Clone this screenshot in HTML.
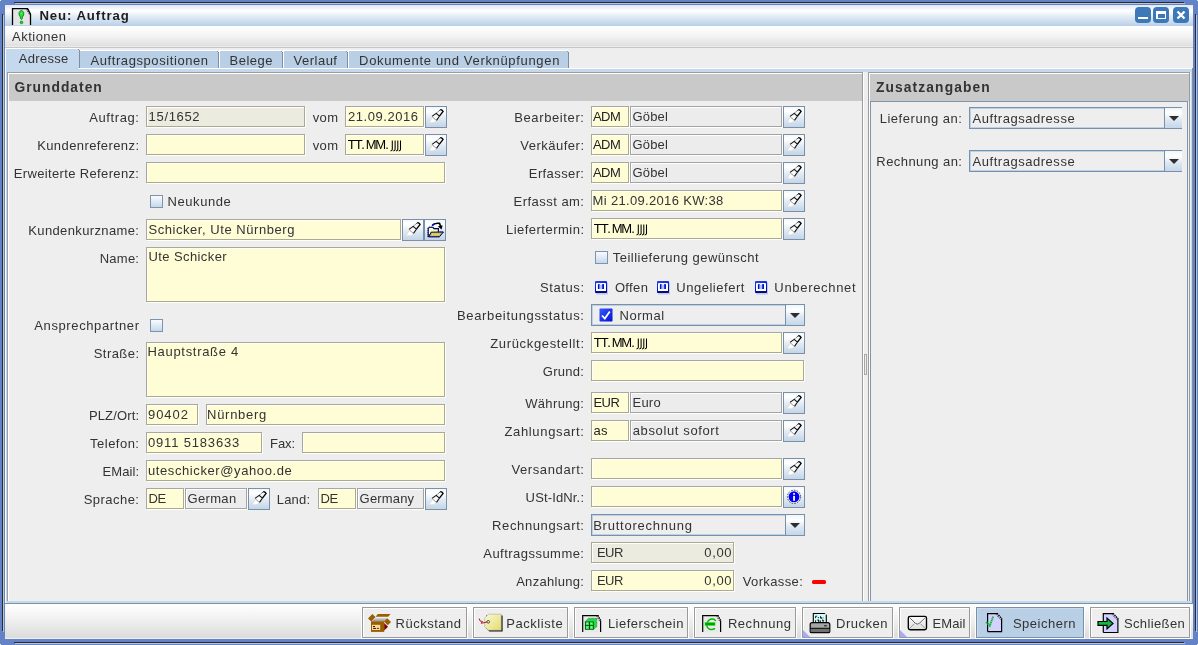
<!DOCTYPE html>
<html><head><meta charset="utf-8"><title>Neu: Auftrag</title>
<style>
html,body{margin:0;padding:0;width:1198px;height:645px;overflow:hidden;position:relative;background:#6383c6}
div{position:absolute}
.t{position:absolute;white-space:nowrap;font-family:"Liberation Sans",sans-serif;line-height:20px;height:20px}
svg{position:absolute}
</style></head><body>
<div style="left:0;top:0;width:1198px;height:645px;overflow:hidden;will-change:transform">
<div style="left:0px;top:0px;width:1198px;height:645px;background:#6383c6"></div>
<div style="left:14px;top:2px;width:1170px;height:1px;background:#2a2a2e"></div>
<div style="left:15px;top:3px;width:1170px;height:1px;background:#b5c6dc"></div>
<div style="left:14px;top:642px;width:1170px;height:1px;background:#2a2a2e"></div>
<div style="left:15px;top:643px;width:1170px;height:1px;background:#b5c6dc"></div>
<div style="left:2px;top:14px;width:1px;height:617px;background:#2a2a2e"></div>
<div style="left:3px;top:15px;width:1px;height:617px;background:#b5c6dc"></div>
<div style="left:1195px;top:14px;width:1px;height:617px;background:#2a2a2e"></div>
<div style="left:1196px;top:15px;width:1px;height:617px;background:#b5c6dc"></div>
<div style="left:0px;top:0px;width:1px;height:1px;background:#f4f4f4"></div>
<div style="left:1197px;top:0px;width:1px;height:1px;background:#f4f4f4"></div>
<div style="left:0px;top:644px;width:1px;height:1px;background:#f4f4f4"></div>
<div style="left:1197px;top:644px;width:1px;height:1px;background:#f4f4f4"></div>
<div style="left:5px;top:5px;width:1188px;height:21px;background:linear-gradient(#dfe7f4 0%,#ffffff 28%,#dfe9f4 58%,#b9d0e8 100%)"></div>
<svg style="position:absolute;left:11px;top:7px" width="22" height="20" viewBox="0 0 22 20">
<path d="M1.5 18 V1.6 H16.6 L19.5 7.2 V18" fill="#e4e4e4" stroke="#000" stroke-width="1.3"/>
<path d="M16.4 1.8 L19.5 7.4" stroke="#000" stroke-width="1.1" stroke-dasharray="1 0.9"/>
<path d="M15.3 2.6 L18.5 7.8" stroke="#222" stroke-width="0.9" stroke-dasharray="0.9 1"/>
<path d="M10.4 3 L12.7 5.3 V8 L11.4 10 V11.5 L10.4 12.6 L9.4 11.5 V10 L8.1 8 V5.3 Z" fill="#20e030" stroke="#007a10" stroke-width="0.8"/>
<path d="M9.6 5.8 h1.6 v1.6 h-1.6z" fill="#8af090" opacity="0.7"/>
<circle cx="10.5" cy="15.4" r="1.35" fill="#20e030" stroke="#007a10" stroke-width="0.7"/>
</svg>
<div class="t" style="left:39.4px;top:6px;font-size:13.2px;font-weight:bold;letter-spacing:0.913px;color:#1e1e1e;">Neu: Auftrag</div>
<div style="left:1135px;top:7px;width:16px;height:16px;background:#3d79b9;border-radius:4px"></div>
<div style="left:1153px;top:7px;width:16px;height:16px;background:#3d79b9;border-radius:4px"></div>
<div style="left:1173px;top:7px;width:16px;height:16px;background:#3d79b9;border-radius:4px"></div>
<div style="left:1138px;top:17px;width:10px;height:2px;background:#fff"></div>
<div style="left:1156px;top:11px;width:10px;height:8px;background:#fff"></div>
<div style="left:1157.5px;top:14px;width:7px;height:3.5px;background:#3d79b9"></div>
<svg style="position:absolute;left:1173px;top:7px" width="16" height="16"><path d="M4.5 4.5 L11.5 11.5 M11.5 4.5 L4.5 11.5" stroke="#fff" stroke-width="2.3"/></svg>
<div style="left:5px;top:26px;width:1188px;height:21px;background:linear-gradient(#ffffff 0%,#f6f6f6 40%,#dedede 100%)"></div>
<div style="left:5px;top:47px;width:1188px;height:1px;background:#c6c6c6"></div>
<div style="left:5px;top:46px;width:1188px;height:1px;background:#ececec"></div>
<div class="t" style="left:12.100000000000001px;top:27px;font-size:13px;letter-spacing:0.469px;color:#333;">Aktionen</div>
<div style="left:5px;top:48px;width:1188px;height:556px;background:#eeeeee"></div>
<div style="left:5px;top:68px;width:1188px;height:536px;background:#ffffff"></div>
<div style="left:6px;top:69px;width:1186px;height:534px;background:#c4d8ee"></div>
<div style="left:5px;top:603px;width:1188px;height:1px;background:#7f90a2"></div>
<div style="left:1192px;top:68px;width:1px;height:536px;background:#7f90a2"></div>
<div style="left:79px;top:50px;width:139px;height:18px;background:#ffffff"></div>
<div style="left:80px;top:51px;width:138px;height:17px;background:#b8cfe6"></div>
<div style="left:218px;top:52px;width:1px;height:16px;background:#7e8ea0"></div>
<div style="left:217px;top:51px;width:1px;height:1px;background:#8896a8"></div>
<div class="t" style="left:90.5px;top:51px;font-size:13px;letter-spacing:0.580px;color:#333;">Auftragspositionen</div>
<div style="left:219px;top:50px;width:63px;height:18px;background:#ffffff"></div>
<div style="left:220px;top:51px;width:62px;height:17px;background:#b8cfe6"></div>
<div style="left:282px;top:52px;width:1px;height:16px;background:#7e8ea0"></div>
<div style="left:281px;top:51px;width:1px;height:1px;background:#8896a8"></div>
<div class="t" style="left:229.5px;top:51px;font-size:13px;letter-spacing:0.512px;color:#333;">Belege</div>
<div style="left:283px;top:50px;width:64px;height:18px;background:#ffffff"></div>
<div style="left:284px;top:51px;width:63px;height:17px;background:#b8cfe6"></div>
<div style="left:347px;top:52px;width:1px;height:16px;background:#7e8ea0"></div>
<div style="left:346px;top:51px;width:1px;height:1px;background:#8896a8"></div>
<div class="t" style="left:293.5px;top:51px;font-size:13px;letter-spacing:0.499px;color:#333;">Verlauf</div>
<div style="left:348px;top:50px;width:220px;height:18px;background:#ffffff"></div>
<div style="left:349px;top:51px;width:219px;height:17px;background:#b8cfe6"></div>
<div style="left:568px;top:52px;width:1px;height:16px;background:#7e8ea0"></div>
<div style="left:567px;top:51px;width:1px;height:1px;background:#8896a8"></div>
<div class="t" style="left:359.1px;top:51px;font-size:13px;letter-spacing:0.670px;color:#333;">Dokumente und Verknüpfungen</div>
<div style="left:5px;top:48px;width:74px;height:21px;background:#ffffff"></div>
<div style="left:6px;top:49px;width:73px;height:23px;background:#c4d8ee"></div>
<div style="left:79px;top:50px;width:1px;height:18px;background:#7e8ea0"></div>
<div style="left:78px;top:49px;width:1px;height:1px;background:#8896a8"></div>
<div class="t" style="left:18.8px;top:49px;font-size:13px;letter-spacing:0.306px;color:#333;">Adresse</div>
<div style="left:7px;top:72px;width:857px;height:529px;background:#eeeeee"></div>
<div style="left:7px;top:72px;width:855px;height:1px;background:#9c9c9c"></div>
<div style="left:7px;top:72px;width:1px;height:529px;background:#9c9c9c"></div>
<div style="left:8px;top:73px;width:854px;height:1px;background:#fff"></div>
<div style="left:8px;top:73px;width:1px;height:528px;background:#fff"></div>
<div style="left:862px;top:72px;width:1px;height:529px;background:#9c9c9c"></div>
<div style="left:863px;top:72px;width:1px;height:529px;background:#fff"></div>
<div style="left:9px;top:74px;width:853px;height:27px;background:#c9c9c9"></div>
<div class="t" style="left:14.5px;top:78px;font-size:13.8px;font-weight:bold;letter-spacing:1.006px;color:#333;">Grunddaten</div>
<div style="left:864px;top:72px;width:4px;height:529px;background:#eeeeee"></div>
<div style="left:868px;top:72px;width:323px;height:529px;background:#eeeeee"></div>
<div style="left:868px;top:72px;width:322px;height:1px;background:#9c9c9c"></div>
<div style="left:868px;top:72px;width:1px;height:529px;background:#9c9c9c"></div>
<div style="left:869px;top:73px;width:321px;height:1px;background:#fff"></div>
<div style="left:869px;top:73px;width:1px;height:528px;background:#fff"></div>
<div style="left:1189px;top:72px;width:1px;height:529px;background:#9c9c9c"></div>
<div style="left:870px;top:74px;width:319px;height:27px;background:#c9c9c9"></div>
<div class="t" style="left:875.9000000000001px;top:78px;font-size:13.8px;font-weight:bold;letter-spacing:1.122px;color:#333;">Zusatzangaben</div>
<div style="left:870px;top:101px;width:318px;height:500px;border:1px solid #7f95ad;border-bottom:none;box-sizing:border-box"></div>
<div class="t" style="left:-261px;width:400px;text-align:right;top:108px;font-size:13px;letter-spacing:0.609px;color:#333;"><span style="margin-right:-0.609px">Auftrag:</span></div>
<div style="left:146px;top:106px;width:159px;height:21px;background:#ecebdf;border:1px solid #abaa90;box-sizing:border-box;box-shadow:inset 1px 1px 0 #fff,1px 1px 0 #fff"></div>
<div class="t" style="left:148.6px;top:107px;font-size:13px;letter-spacing:0.662px;color:#333;">15/1652</div>
<div class="t" style="left:312.7px;top:108px;font-size:13px;letter-spacing:0.387px;color:#333;">vom</div>
<div style="left:345px;top:106px;width:79px;height:21px;background:#fffdd6;border:1px solid #abaa90;box-sizing:border-box;box-shadow:inset 1px 1px 0 #fff,1px 1px 0 #fff"></div>
<div class="t" style="left:348.0px;top:107px;font-size:13px;letter-spacing:0.550px;color:#333;">21.09.2016</div>
<div style="left:425px;top:106px;width:22px;height:22px;border:1px solid #7b90a8;box-sizing:border-box;background:linear-gradient(#f4f8fc 0%,#ffffff 20%,#dde8f3 60%,#c3d5e8 100%)"></div>
<svg style="position:absolute;left:425px;top:106px" width="22" height="22" viewBox="0 0 22 22">
<path d="M4 16.8 L7.2 11.4 L11.2 14.4 L9 16.8 Z" fill="#ffffff" stroke="#d8d0c8" stroke-width="0.6"/>
<path d="M11.2 7.4 L15.2 3.8 L18.1 6.4 L14.4 10.2 Z" fill="#f6f6f6"/>
<path d="M11.2 7.4 L15.2 3.8" stroke="#333" stroke-width="1" stroke-dasharray="1.2 0.8"/>
<path d="M15.2 3.8 Q16.8 3.4 18.1 5.4 L14.4 10.2" fill="none" stroke="#000" stroke-width="1.3"/>
<path d="M7 10.4 L11.2 7.4 L14.4 10.2 L11.5 14.4 Z" fill="#fafafa"/>
<path d="M7 10.4 L11.2 7.4 L14.4 10.2 L11.5 14.4" fill="none" stroke="#111" stroke-width="1.1"/>
<path d="M7 10.4 L11.5 14.4" stroke="#777" stroke-width="0.6"/>
</svg>
<div class="t" style="left:-261px;width:400px;text-align:right;top:136px;font-size:13px;letter-spacing:0.409px;color:#333;"><span style="margin-right:-0.409px">Kundenreferenz:</span></div>
<div style="left:146px;top:134px;width:159px;height:21px;background:#fffdd6;border:1px solid #abaa90;box-sizing:border-box;box-shadow:inset 1px 1px 0 #fff,1px 1px 0 #fff"></div>
<div class="t" style="left:312.7px;top:136px;font-size:13px;letter-spacing:0.387px;color:#333;">vom</div>
<div style="left:345px;top:134px;width:79px;height:21px;background:#fffdd6;border:1px solid #abaa90;box-sizing:border-box;box-shadow:inset 1px 1px 0 #fff,1px 1px 0 #fff"></div>
<div class="t" style="left:347.8px;top:135px;font-size:13px;letter-spacing:0.000px;color:#000;">T</div>
<div class="t" style="left:354.8px;top:135px;font-size:13px;letter-spacing:0.000px;color:#000;">T</div>
<div class="t" style="left:361.3px;top:135px;font-size:13px;letter-spacing:0.000px;color:#000;">.</div>
<div class="t" style="left:365.8px;top:135px;font-size:13px;letter-spacing:0.000px;color:#000;">M</div>
<div class="t" style="left:375.3px;top:135px;font-size:13px;letter-spacing:0.000px;color:#000;">M</div>
<div class="t" style="left:385.3px;top:135px;font-size:13px;letter-spacing:0.000px;color:#000;">.</div>
<svg style="position:absolute;left:0px;top:0px" width="1198" height="645"><path d="M392.30 140.5 V149.6 Q392.30 150.9 390.50 150.9 M395.10 140.5 V149.6 Q395.10 150.9 393.30 150.9 M397.80 140.5 V149.6 Q397.80 150.9 396.00 150.9 M400.50 140.5 V149.6 Q400.50 150.9 398.70 150.9 " fill="none" stroke="#000" stroke-width="1.05"/></svg>
<div style="left:425px;top:134px;width:22px;height:22px;border:1px solid #7b90a8;box-sizing:border-box;background:linear-gradient(#f4f8fc 0%,#ffffff 20%,#dde8f3 60%,#c3d5e8 100%)"></div>
<svg style="position:absolute;left:425px;top:134px" width="22" height="22" viewBox="0 0 22 22">
<path d="M4 16.8 L7.2 11.4 L11.2 14.4 L9 16.8 Z" fill="#ffffff" stroke="#d8d0c8" stroke-width="0.6"/>
<path d="M11.2 7.4 L15.2 3.8 L18.1 6.4 L14.4 10.2 Z" fill="#f6f6f6"/>
<path d="M11.2 7.4 L15.2 3.8" stroke="#333" stroke-width="1" stroke-dasharray="1.2 0.8"/>
<path d="M15.2 3.8 Q16.8 3.4 18.1 5.4 L14.4 10.2" fill="none" stroke="#000" stroke-width="1.3"/>
<path d="M7 10.4 L11.2 7.4 L14.4 10.2 L11.5 14.4 Z" fill="#fafafa"/>
<path d="M7 10.4 L11.2 7.4 L14.4 10.2 L11.5 14.4" fill="none" stroke="#111" stroke-width="1.1"/>
<path d="M7 10.4 L11.5 14.4" stroke="#777" stroke-width="0.6"/>
</svg>
<div class="t" style="left:-261px;width:400px;text-align:right;top:164px;font-size:13px;letter-spacing:0.354px;color:#333;"><span style="margin-right:-0.354px">Erweiterte Referenz:</span></div>
<div style="left:146px;top:162px;width:299px;height:21px;background:#fffdd6;border:1px solid #abaa90;box-sizing:border-box;box-shadow:inset 1px 1px 0 #fff,1px 1px 0 #fff"></div>
<div style="left:150px;top:195px;width:13px;height:13px;border:1px solid #7d94ae;box-sizing:border-box;background:linear-gradient(#fafcfe,#c6d8ec)"></div>
<div class="t" style="left:167.5px;top:192px;font-size:13px;letter-spacing:0.577px;color:#333;">Neukunde</div>
<div class="t" style="left:-261px;width:400px;text-align:right;top:221px;font-size:13px;letter-spacing:0.372px;color:#333;"><span style="margin-right:-0.372px">Kundenkurzname:</span></div>
<div style="left:146px;top:219px;width:255px;height:21px;background:#fffdd6;border:1px solid #abaa90;box-sizing:border-box;box-shadow:inset 1px 1px 0 #fff,1px 1px 0 #fff"></div>
<div class="t" style="left:148.5px;top:220px;font-size:13px;letter-spacing:0.548px;color:#333;">Schicker, Ute Nürnberg</div>
<div style="left:402px;top:219px;width:22px;height:22px;border:1px solid #7b90a8;box-sizing:border-box;background:linear-gradient(#f4f8fc 0%,#ffffff 20%,#dde8f3 60%,#c3d5e8 100%)"></div>
<svg style="position:absolute;left:402px;top:219px" width="22" height="22" viewBox="0 0 22 22">
<path d="M4 16.8 L7.2 11.4 L11.2 14.4 L9 16.8 Z" fill="#ffffff" stroke="#d8d0c8" stroke-width="0.6"/>
<path d="M11.2 7.4 L15.2 3.8 L18.1 6.4 L14.4 10.2 Z" fill="#f6f6f6"/>
<path d="M11.2 7.4 L15.2 3.8" stroke="#333" stroke-width="1" stroke-dasharray="1.2 0.8"/>
<path d="M15.2 3.8 Q16.8 3.4 18.1 5.4 L14.4 10.2" fill="none" stroke="#000" stroke-width="1.3"/>
<path d="M7 10.4 L11.2 7.4 L14.4 10.2 L11.5 14.4 Z" fill="#fafafa"/>
<path d="M7 10.4 L11.2 7.4 L14.4 10.2 L11.5 14.4" fill="none" stroke="#111" stroke-width="1.1"/>
<path d="M7 10.4 L11.5 14.4" stroke="#777" stroke-width="0.6"/>
</svg>
<div style="left:424px;top:219px;width:22px;height:22px;border:1px solid #7b90a8;box-sizing:border-box;background:linear-gradient(#f4f8fc 0%,#ffffff 20%,#dde8f3 60%,#c3d5e8 100%)"></div>
<svg style="position:absolute;left:424px;top:219px" width="22" height="22" viewBox="0 0 22 22">
<path d="M4.2 18 V9.2 L5.6 8.2 H8.8 L10 9.6 H14.4 V12.6" fill="#fbfbf0" stroke="#000" stroke-width="1.1"/>
<path d="M4.2 18 V9.2 L5.6 8.2 H8.8 L10 9.6 H14.4 V12.6" fill="none" stroke="#0010e0" stroke-width="1.1" stroke-dasharray="0.9 1.1"/>
<path d="M4.6 17.8 L7.4 13 H19.4 L15.4 17.8 Z" fill="#c8c060" stroke="#000" stroke-width="1"/>
<path d="M4.6 17.8 L7.4 13 H19.4 L15.4 17.8 Z" fill="none" stroke="#0010e0" stroke-width="1" stroke-dasharray="0.9 1.1"/>
<path d="M8 15.4 H15.5" stroke="#e8e070" stroke-width="1.6" stroke-dasharray="1 0.8"/>
<path d="M5.8 12.2 H12.5" stroke="#ffff20" stroke-width="1.3" stroke-dasharray="1 0.9"/>
<path d="M8.2 6.6 Q10.5 3.6 15.6 4.4 L16.6 7.6" fill="none" stroke="#000" stroke-width="1.6"/>
<path d="M8.2 6.6 Q9 5.4 10.4 4.8" fill="none" stroke="#0010d0" stroke-width="1.2"/>
<path d="M13.8 7.6 L18.6 6.2 L17.6 10.4 Z" fill="#000"/>
</svg>
<div class="t" style="left:-261px;width:400px;text-align:right;top:249px;font-size:13px;letter-spacing:0.259px;color:#333;"><span style="margin-right:-0.259px">Name:</span></div>
<div style="left:146px;top:247px;width:299px;height:55px;background:#fffdd6;border:1px solid #abaa90;box-sizing:border-box;box-shadow:inset 1px 1px 0 #fff,1px 1px 0 #fff"></div>
<div class="t" style="left:148.5px;top:247px;font-size:13px;letter-spacing:0.401px;color:#333;">Ute Schicker</div>
<div class="t" style="left:-261px;width:400px;text-align:right;top:316px;font-size:13px;letter-spacing:0.616px;color:#333;"><span style="margin-right:-0.616px">Ansprechpartner</span></div>
<div style="left:150px;top:319px;width:13px;height:13px;border:1px solid #7d94ae;box-sizing:border-box;background:linear-gradient(#fafcfe,#c6d8ec)"></div>
<div class="t" style="left:-261px;width:400px;text-align:right;top:344px;font-size:13px;letter-spacing:0.441px;color:#333;"><span style="margin-right:-0.441px">Straße:</span></div>
<div style="left:146px;top:342px;width:299px;height:55px;background:#fffdd6;border:1px solid #abaa90;box-sizing:border-box;box-shadow:inset 1px 1px 0 #fff,1px 1px 0 #fff"></div>
<div class="t" style="left:147.5px;top:342px;font-size:13px;letter-spacing:0.695px;color:#333;">Hauptstraße 4</div>
<div class="t" style="left:-261px;width:400px;text-align:right;top:406px;font-size:13px;letter-spacing:0.131px;color:#333;"><span style="margin-right:-0.131px">PLZ/Ort:</span></div>
<div style="left:146px;top:404px;width:52px;height:21px;background:#fffdd6;border:1px solid #abaa90;box-sizing:border-box;box-shadow:inset 1px 1px 0 #fff,1px 1px 0 #fff"></div>
<div class="t" style="left:148.0px;top:405px;font-size:13px;letter-spacing:0.942px;color:#333;">90402</div>
<div style="left:206px;top:404px;width:239px;height:21px;background:#fffdd6;border:1px solid #abaa90;box-sizing:border-box;box-shadow:inset 1px 1px 0 #fff,1px 1px 0 #fff"></div>
<div class="t" style="left:207.1px;top:405px;font-size:13px;letter-spacing:0.699px;color:#333;">Nürnberg</div>
<div class="t" style="left:-261px;width:400px;text-align:right;top:434px;font-size:13px;letter-spacing:0.477px;color:#333;"><span style="margin-right:-0.477px">Telefon:</span></div>
<div style="left:146px;top:432px;width:116px;height:21px;background:#fffdd6;border:1px solid #abaa90;box-sizing:border-box;box-shadow:inset 1px 1px 0 #fff,1px 1px 0 #fff"></div>
<div class="t" style="left:148.0px;top:433px;font-size:13px;letter-spacing:0.822px;color:#333;">0911 5183633</div>
<div class="t" style="left:270.1px;top:434px;font-size:13px;letter-spacing:-0.118px;color:#333;">Fax:</div>
<div style="left:302px;top:432px;width:143px;height:21px;background:#fffdd6;border:1px solid #abaa90;box-sizing:border-box;box-shadow:inset 1px 1px 0 #fff,1px 1px 0 #fff"></div>
<div class="t" style="left:-261px;width:400px;text-align:right;top:462px;font-size:13px;letter-spacing:0.080px;color:#333;"><span style="margin-right:-0.080px">EMail:</span></div>
<div style="left:146px;top:460px;width:299px;height:21px;background:#fffdd6;border:1px solid #abaa90;box-sizing:border-box;box-shadow:inset 1px 1px 0 #fff,1px 1px 0 #fff"></div>
<div class="t" style="left:148.0px;top:461px;font-size:13px;letter-spacing:0.595px;color:#333;">uteschicker@yahoo.de</div>
<div class="t" style="left:-261px;width:400px;text-align:right;top:490px;font-size:13px;letter-spacing:0.466px;color:#333;"><span style="margin-right:-0.466px">Sprache:</span></div>
<div style="left:146px;top:488px;width:38px;height:21px;background:#fffdd6;border:1px solid #abaa90;box-sizing:border-box;box-shadow:inset 1px 1px 0 #fff,1px 1px 0 #fff"></div>
<div class="t" style="left:148.5px;top:489px;font-size:13px;letter-spacing:-0.267px;color:#333;">DE</div>
<div style="left:185px;top:488px;width:62px;height:21px;background:#ececec;border:1px solid #a3a3a3;box-sizing:border-box;box-shadow:inset 1px 1px 0 #fff,1px 1px 0 #fff"></div>
<div class="t" style="left:187.5px;top:489px;font-size:13px;letter-spacing:0.332px;color:#333;">German</div>
<div style="left:248px;top:488px;width:22px;height:22px;border:1px solid #7b90a8;box-sizing:border-box;background:linear-gradient(#f4f8fc 0%,#ffffff 20%,#dde8f3 60%,#c3d5e8 100%)"></div>
<svg style="position:absolute;left:248px;top:488px" width="22" height="22" viewBox="0 0 22 22">
<path d="M4 16.8 L7.2 11.4 L11.2 14.4 L9 16.8 Z" fill="#ffffff" stroke="#d8d0c8" stroke-width="0.6"/>
<path d="M11.2 7.4 L15.2 3.8 L18.1 6.4 L14.4 10.2 Z" fill="#f6f6f6"/>
<path d="M11.2 7.4 L15.2 3.8" stroke="#333" stroke-width="1" stroke-dasharray="1.2 0.8"/>
<path d="M15.2 3.8 Q16.8 3.4 18.1 5.4 L14.4 10.2" fill="none" stroke="#000" stroke-width="1.3"/>
<path d="M7 10.4 L11.2 7.4 L14.4 10.2 L11.5 14.4 Z" fill="#fafafa"/>
<path d="M7 10.4 L11.2 7.4 L14.4 10.2 L11.5 14.4" fill="none" stroke="#111" stroke-width="1.1"/>
<path d="M7 10.4 L11.5 14.4" stroke="#777" stroke-width="0.6"/>
</svg>
<div class="t" style="left:276.70000000000005px;top:490px;font-size:13px;letter-spacing:0.231px;color:#333;">Land:</div>
<div style="left:318px;top:488px;width:38px;height:21px;background:#fffdd6;border:1px solid #abaa90;box-sizing:border-box;box-shadow:inset 1px 1px 0 #fff,1px 1px 0 #fff"></div>
<div class="t" style="left:320.5px;top:489px;font-size:13px;letter-spacing:-0.267px;color:#333;">DE</div>
<div style="left:357px;top:488px;width:67px;height:21px;background:#ececec;border:1px solid #a3a3a3;box-sizing:border-box;box-shadow:inset 1px 1px 0 #fff,1px 1px 0 #fff"></div>
<div class="t" style="left:359.6px;top:489px;font-size:13px;letter-spacing:0.170px;color:#333;">Germany</div>
<div style="left:425px;top:488px;width:22px;height:22px;border:1px solid #7b90a8;box-sizing:border-box;background:linear-gradient(#f4f8fc 0%,#ffffff 20%,#dde8f3 60%,#c3d5e8 100%)"></div>
<svg style="position:absolute;left:425px;top:488px" width="22" height="22" viewBox="0 0 22 22">
<path d="M4 16.8 L7.2 11.4 L11.2 14.4 L9 16.8 Z" fill="#ffffff" stroke="#d8d0c8" stroke-width="0.6"/>
<path d="M11.2 7.4 L15.2 3.8 L18.1 6.4 L14.4 10.2 Z" fill="#f6f6f6"/>
<path d="M11.2 7.4 L15.2 3.8" stroke="#333" stroke-width="1" stroke-dasharray="1.2 0.8"/>
<path d="M15.2 3.8 Q16.8 3.4 18.1 5.4 L14.4 10.2" fill="none" stroke="#000" stroke-width="1.3"/>
<path d="M7 10.4 L11.2 7.4 L14.4 10.2 L11.5 14.4 Z" fill="#fafafa"/>
<path d="M7 10.4 L11.2 7.4 L14.4 10.2 L11.5 14.4" fill="none" stroke="#111" stroke-width="1.1"/>
<path d="M7 10.4 L11.5 14.4" stroke="#777" stroke-width="0.6"/>
</svg>
<div class="t" style="left:184px;width:400px;text-align:right;top:108px;font-size:13px;letter-spacing:0.617px;color:#333;"><span style="margin-right:-0.617px">Bearbeiter:</span></div>
<div style="left:591px;top:106px;width:38px;height:21px;background:#fffdd6;border:1px solid #abaa90;box-sizing:border-box;box-shadow:inset 1px 1px 0 #fff,1px 1px 0 #fff"></div>
<div class="t" style="left:592.9px;top:107px;font-size:13px;letter-spacing:-0.509px;color:#222;">ADM</div>
<div style="left:630px;top:106px;width:152px;height:21px;background:#ececec;border:1px solid #a3a3a3;box-sizing:border-box;box-shadow:inset 1px 1px 0 #fff,1px 1px 0 #fff"></div>
<div class="t" style="left:632.6px;top:107px;font-size:13px;letter-spacing:0.128px;color:#333;">Göbel</div>
<div style="left:783px;top:106px;width:22px;height:22px;border:1px solid #7b90a8;box-sizing:border-box;background:linear-gradient(#f4f8fc 0%,#ffffff 20%,#dde8f3 60%,#c3d5e8 100%)"></div>
<svg style="position:absolute;left:783px;top:106px" width="22" height="22" viewBox="0 0 22 22">
<path d="M4 16.8 L7.2 11.4 L11.2 14.4 L9 16.8 Z" fill="#ffffff" stroke="#d8d0c8" stroke-width="0.6"/>
<path d="M11.2 7.4 L15.2 3.8 L18.1 6.4 L14.4 10.2 Z" fill="#f6f6f6"/>
<path d="M11.2 7.4 L15.2 3.8" stroke="#333" stroke-width="1" stroke-dasharray="1.2 0.8"/>
<path d="M15.2 3.8 Q16.8 3.4 18.1 5.4 L14.4 10.2" fill="none" stroke="#000" stroke-width="1.3"/>
<path d="M7 10.4 L11.2 7.4 L14.4 10.2 L11.5 14.4 Z" fill="#fafafa"/>
<path d="M7 10.4 L11.2 7.4 L14.4 10.2 L11.5 14.4" fill="none" stroke="#111" stroke-width="1.1"/>
<path d="M7 10.4 L11.5 14.4" stroke="#777" stroke-width="0.6"/>
</svg>
<div class="t" style="left:184px;width:400px;text-align:right;top:136px;font-size:13px;letter-spacing:0.488px;color:#333;"><span style="margin-right:-0.488px">Verkäufer:</span></div>
<div style="left:591px;top:134px;width:38px;height:21px;background:#fffdd6;border:1px solid #abaa90;box-sizing:border-box;box-shadow:inset 1px 1px 0 #fff,1px 1px 0 #fff"></div>
<div class="t" style="left:592.9px;top:135px;font-size:13px;letter-spacing:-0.509px;color:#222;">ADM</div>
<div style="left:630px;top:134px;width:152px;height:21px;background:#ececec;border:1px solid #a3a3a3;box-sizing:border-box;box-shadow:inset 1px 1px 0 #fff,1px 1px 0 #fff"></div>
<div class="t" style="left:632.6px;top:135px;font-size:13px;letter-spacing:0.128px;color:#333;">Göbel</div>
<div style="left:783px;top:134px;width:22px;height:22px;border:1px solid #7b90a8;box-sizing:border-box;background:linear-gradient(#f4f8fc 0%,#ffffff 20%,#dde8f3 60%,#c3d5e8 100%)"></div>
<svg style="position:absolute;left:783px;top:134px" width="22" height="22" viewBox="0 0 22 22">
<path d="M4 16.8 L7.2 11.4 L11.2 14.4 L9 16.8 Z" fill="#ffffff" stroke="#d8d0c8" stroke-width="0.6"/>
<path d="M11.2 7.4 L15.2 3.8 L18.1 6.4 L14.4 10.2 Z" fill="#f6f6f6"/>
<path d="M11.2 7.4 L15.2 3.8" stroke="#333" stroke-width="1" stroke-dasharray="1.2 0.8"/>
<path d="M15.2 3.8 Q16.8 3.4 18.1 5.4 L14.4 10.2" fill="none" stroke="#000" stroke-width="1.3"/>
<path d="M7 10.4 L11.2 7.4 L14.4 10.2 L11.5 14.4 Z" fill="#fafafa"/>
<path d="M7 10.4 L11.2 7.4 L14.4 10.2 L11.5 14.4" fill="none" stroke="#111" stroke-width="1.1"/>
<path d="M7 10.4 L11.5 14.4" stroke="#777" stroke-width="0.6"/>
</svg>
<div class="t" style="left:184px;width:400px;text-align:right;top:164px;font-size:13px;letter-spacing:0.393px;color:#333;"><span style="margin-right:-0.393px">Erfasser:</span></div>
<div style="left:591px;top:162px;width:38px;height:21px;background:#fffdd6;border:1px solid #abaa90;box-sizing:border-box;box-shadow:inset 1px 1px 0 #fff,1px 1px 0 #fff"></div>
<div class="t" style="left:592.9px;top:163px;font-size:13px;letter-spacing:-0.509px;color:#222;">ADM</div>
<div style="left:630px;top:162px;width:152px;height:21px;background:#ececec;border:1px solid #a3a3a3;box-sizing:border-box;box-shadow:inset 1px 1px 0 #fff,1px 1px 0 #fff"></div>
<div class="t" style="left:632.6px;top:163px;font-size:13px;letter-spacing:0.128px;color:#333;">Göbel</div>
<div style="left:783px;top:162px;width:22px;height:22px;border:1px solid #7b90a8;box-sizing:border-box;background:linear-gradient(#f4f8fc 0%,#ffffff 20%,#dde8f3 60%,#c3d5e8 100%)"></div>
<svg style="position:absolute;left:783px;top:162px" width="22" height="22" viewBox="0 0 22 22">
<path d="M4 16.8 L7.2 11.4 L11.2 14.4 L9 16.8 Z" fill="#ffffff" stroke="#d8d0c8" stroke-width="0.6"/>
<path d="M11.2 7.4 L15.2 3.8 L18.1 6.4 L14.4 10.2 Z" fill="#f6f6f6"/>
<path d="M11.2 7.4 L15.2 3.8" stroke="#333" stroke-width="1" stroke-dasharray="1.2 0.8"/>
<path d="M15.2 3.8 Q16.8 3.4 18.1 5.4 L14.4 10.2" fill="none" stroke="#000" stroke-width="1.3"/>
<path d="M7 10.4 L11.2 7.4 L14.4 10.2 L11.5 14.4 Z" fill="#fafafa"/>
<path d="M7 10.4 L11.2 7.4 L14.4 10.2 L11.5 14.4" fill="none" stroke="#111" stroke-width="1.1"/>
<path d="M7 10.4 L11.5 14.4" stroke="#777" stroke-width="0.6"/>
</svg>
<div class="t" style="left:184px;width:400px;text-align:right;top:192px;font-size:13px;letter-spacing:0.464px;color:#333;"><span style="margin-right:-0.464px">Erfasst am:</span></div>
<div style="left:591px;top:190px;width:191px;height:21px;background:#fffdd6;border:1px solid #abaa90;box-sizing:border-box;box-shadow:inset 1px 1px 0 #fff,1px 1px 0 #fff"></div>
<div class="t" style="left:592.6px;top:191px;font-size:13px;letter-spacing:0.325px;color:#333;">Mi 21.09.2016 KW:38</div>
<div style="left:783px;top:190px;width:22px;height:22px;border:1px solid #7b90a8;box-sizing:border-box;background:linear-gradient(#f4f8fc 0%,#ffffff 20%,#dde8f3 60%,#c3d5e8 100%)"></div>
<svg style="position:absolute;left:783px;top:190px" width="22" height="22" viewBox="0 0 22 22">
<path d="M4 16.8 L7.2 11.4 L11.2 14.4 L9 16.8 Z" fill="#ffffff" stroke="#d8d0c8" stroke-width="0.6"/>
<path d="M11.2 7.4 L15.2 3.8 L18.1 6.4 L14.4 10.2 Z" fill="#f6f6f6"/>
<path d="M11.2 7.4 L15.2 3.8" stroke="#333" stroke-width="1" stroke-dasharray="1.2 0.8"/>
<path d="M15.2 3.8 Q16.8 3.4 18.1 5.4 L14.4 10.2" fill="none" stroke="#000" stroke-width="1.3"/>
<path d="M7 10.4 L11.2 7.4 L14.4 10.2 L11.5 14.4 Z" fill="#fafafa"/>
<path d="M7 10.4 L11.2 7.4 L14.4 10.2 L11.5 14.4" fill="none" stroke="#111" stroke-width="1.1"/>
<path d="M7 10.4 L11.5 14.4" stroke="#777" stroke-width="0.6"/>
</svg>
<div class="t" style="left:184px;width:400px;text-align:right;top:220px;font-size:13px;letter-spacing:0.485px;color:#333;"><span style="margin-right:-0.485px">Liefertermin:</span></div>
<div style="left:591px;top:218px;width:191px;height:21px;background:#fffdd6;border:1px solid #abaa90;box-sizing:border-box;box-shadow:inset 1px 1px 0 #fff,1px 1px 0 #fff"></div>
<div class="t" style="left:593.8px;top:219px;font-size:13px;letter-spacing:0.000px;color:#000;">T</div>
<div class="t" style="left:600.8px;top:219px;font-size:13px;letter-spacing:0.000px;color:#000;">T</div>
<div class="t" style="left:607.3px;top:219px;font-size:13px;letter-spacing:0.000px;color:#000;">.</div>
<div class="t" style="left:611.8px;top:219px;font-size:13px;letter-spacing:0.000px;color:#000;">M</div>
<div class="t" style="left:621.3px;top:219px;font-size:13px;letter-spacing:0.000px;color:#000;">M</div>
<div class="t" style="left:631.3px;top:219px;font-size:13px;letter-spacing:0.000px;color:#000;">.</div>
<svg style="position:absolute;left:0px;top:0px" width="1198" height="645"><path d="M638.30 224.5 V233.6 Q638.30 234.9 636.50 234.9 M641.10 224.5 V233.6 Q641.10 234.9 639.30 234.9 M643.80 224.5 V233.6 Q643.80 234.9 642.00 234.9 M646.50 224.5 V233.6 Q646.50 234.9 644.70 234.9 " fill="none" stroke="#000" stroke-width="1.05"/></svg>
<div style="left:783px;top:218px;width:22px;height:22px;border:1px solid #7b90a8;box-sizing:border-box;background:linear-gradient(#f4f8fc 0%,#ffffff 20%,#dde8f3 60%,#c3d5e8 100%)"></div>
<svg style="position:absolute;left:783px;top:218px" width="22" height="22" viewBox="0 0 22 22">
<path d="M4 16.8 L7.2 11.4 L11.2 14.4 L9 16.8 Z" fill="#ffffff" stroke="#d8d0c8" stroke-width="0.6"/>
<path d="M11.2 7.4 L15.2 3.8 L18.1 6.4 L14.4 10.2 Z" fill="#f6f6f6"/>
<path d="M11.2 7.4 L15.2 3.8" stroke="#333" stroke-width="1" stroke-dasharray="1.2 0.8"/>
<path d="M15.2 3.8 Q16.8 3.4 18.1 5.4 L14.4 10.2" fill="none" stroke="#000" stroke-width="1.3"/>
<path d="M7 10.4 L11.2 7.4 L14.4 10.2 L11.5 14.4 Z" fill="#fafafa"/>
<path d="M7 10.4 L11.2 7.4 L14.4 10.2 L11.5 14.4" fill="none" stroke="#111" stroke-width="1.1"/>
<path d="M7 10.4 L11.5 14.4" stroke="#777" stroke-width="0.6"/>
</svg>
<div style="left:595px;top:251px;width:13px;height:13px;border:1px solid #7d94ae;box-sizing:border-box;background:linear-gradient(#fafcfe,#c6d8ec)"></div>
<div class="t" style="left:612.7px;top:248px;font-size:13px;letter-spacing:0.488px;color:#333;">Teillieferung gewünscht</div>
<div class="t" style="left:184px;width:400px;text-align:right;top:278px;font-size:13px;letter-spacing:0.582px;color:#333;"><span style="margin-right:-0.582px">Status:</span></div>
<svg style="position:absolute;left:594px;top:281px" width="16" height="15" viewBox="0 0 16 15">
<defs><linearGradient id="sg594" x1="0" y1="0" x2="0.3" y2="1"><stop offset="0" stop-color="#2a4af0"/><stop offset="0.6" stop-color="#0018d8"/><stop offset="1" stop-color="#000890"/></linearGradient></defs>
<rect x="2" y="1.5" width="12" height="12" fill="#9aa0c8" opacity="0.5"/>
<rect x="1" y="0" width="12" height="12" rx="0.8" fill="url(#sg594)"/>
<path d="M2 3 Q2 2 3 2 H6.5 Q7 2.3 7.5 2 H11 Q12 2 12 3 V10 H2 Z" fill="#fff"/>
<rect x="3.9" y="3.1" width="1.8" height="4.9" fill="#0018c8"/><rect x="8.1" y="3.1" width="1.9" height="4.9" fill="#0018c8"/>
<rect x="5.7" y="3.6" width="2.4" height="4.6" fill="#b8c0f8"/>
</svg>
<div class="t" style="left:614.9000000000001px;top:278px;font-size:13px;letter-spacing:0.361px;color:#333;">Offen</div>
<svg style="position:absolute;left:656px;top:281px" width="16" height="15" viewBox="0 0 16 15">
<defs><linearGradient id="sg656" x1="0" y1="0" x2="0.3" y2="1"><stop offset="0" stop-color="#2a4af0"/><stop offset="0.6" stop-color="#0018d8"/><stop offset="1" stop-color="#000890"/></linearGradient></defs>
<rect x="2" y="1.5" width="12" height="12" fill="#9aa0c8" opacity="0.5"/>
<rect x="1" y="0" width="12" height="12" rx="0.8" fill="url(#sg656)"/>
<path d="M2 3 Q2 2 3 2 H6.5 Q7 2.3 7.5 2 H11 Q12 2 12 3 V10 H2 Z" fill="#fff"/>
<rect x="3.9" y="3.1" width="1.8" height="4.9" fill="#0018c8"/><rect x="8.1" y="3.1" width="1.9" height="4.9" fill="#0018c8"/>
<rect x="5.7" y="3.6" width="2.4" height="4.6" fill="#b8c0f8"/>
</svg>
<div class="t" style="left:676.3px;top:278px;font-size:13px;letter-spacing:0.518px;color:#333;">Ungeliefert</div>
<svg style="position:absolute;left:754px;top:281px" width="16" height="15" viewBox="0 0 16 15">
<defs><linearGradient id="sg754" x1="0" y1="0" x2="0.3" y2="1"><stop offset="0" stop-color="#2a4af0"/><stop offset="0.6" stop-color="#0018d8"/><stop offset="1" stop-color="#000890"/></linearGradient></defs>
<rect x="2" y="1.5" width="12" height="12" fill="#9aa0c8" opacity="0.5"/>
<rect x="1" y="0" width="12" height="12" rx="0.8" fill="url(#sg754)"/>
<path d="M2 3 Q2 2 3 2 H6.5 Q7 2.3 7.5 2 H11 Q12 2 12 3 V10 H2 Z" fill="#fff"/>
<rect x="3.9" y="3.1" width="1.8" height="4.9" fill="#0018c8"/><rect x="8.1" y="3.1" width="1.9" height="4.9" fill="#0018c8"/>
<rect x="5.7" y="3.6" width="2.4" height="4.6" fill="#b8c0f8"/>
</svg>
<div class="t" style="left:774.3px;top:278px;font-size:13px;letter-spacing:0.692px;color:#333;">Unberechnet</div>
<div class="t" style="left:184px;width:400px;text-align:right;top:306px;font-size:13px;letter-spacing:0.677px;color:#333;"><span style="margin-right:-0.677px">Bearbeitungsstatus:</span></div>
<div style="left:591px;top:304px;width:214px;height:22px;border:1px solid #7890a8;box-sizing:border-box;background:#eeeeee;box-shadow:inset 1px 1px 0 #bcd0e6,inset -1px -1px 0 #bcd0e6"></div>
<div style="left:785px;top:304px;width:20px;height:22px;border:1px solid #7890a8;box-sizing:border-box;background:linear-gradient(#f0f5fb 0%,#ffffff 25%,#dce7f2 60%,#c5d6e9 100%)"></div>
<svg style="position:absolute;left:790px;top:313px" width="10" height="5"><path d="M0 0 H10 L5 5 Z" fill="#2e2e2e"/></svg>
<svg style="position:absolute;left:599px;top:308px" width="14" height="14" viewBox="0 0 14 14">
<defs><linearGradient id="cg" x1="0" y1="0" x2="1" y2="1"><stop offset="0" stop-color="#3a5aff"/><stop offset="1" stop-color="#0010d0"/></linearGradient></defs>
<rect x="0.5" y="0.5" width="13" height="13" rx="0.8" fill="url(#cg)"/>
<path d="M3 7.5 L5.8 10.5 L10.8 3.5" fill="none" stroke="#fff" stroke-width="1.8"/></svg>
<div class="t" style="left:619.5px;top:306px;font-size:13px;letter-spacing:0.538px;color:#333;">Normal</div>
<div class="t" style="left:184px;width:400px;text-align:right;top:334px;font-size:13px;letter-spacing:0.660px;color:#333;"><span style="margin-right:-0.660px">Zurückgestellt:</span></div>
<div style="left:591px;top:332px;width:191px;height:21px;background:#fffdd6;border:1px solid #abaa90;box-sizing:border-box;box-shadow:inset 1px 1px 0 #fff,1px 1px 0 #fff"></div>
<div class="t" style="left:593.8px;top:333px;font-size:13px;letter-spacing:0.000px;color:#000;">T</div>
<div class="t" style="left:600.8px;top:333px;font-size:13px;letter-spacing:0.000px;color:#000;">T</div>
<div class="t" style="left:607.3px;top:333px;font-size:13px;letter-spacing:0.000px;color:#000;">.</div>
<div class="t" style="left:611.8px;top:333px;font-size:13px;letter-spacing:0.000px;color:#000;">M</div>
<div class="t" style="left:621.3px;top:333px;font-size:13px;letter-spacing:0.000px;color:#000;">M</div>
<div class="t" style="left:631.3px;top:333px;font-size:13px;letter-spacing:0.000px;color:#000;">.</div>
<svg style="position:absolute;left:0px;top:0px" width="1198" height="645"><path d="M638.30 338.5 V347.6 Q638.30 348.9 636.50 348.9 M641.10 338.5 V347.6 Q641.10 348.9 639.30 348.9 M643.80 338.5 V347.6 Q643.80 348.9 642.00 348.9 M646.50 338.5 V347.6 Q646.50 348.9 644.70 348.9 " fill="none" stroke="#000" stroke-width="1.05"/></svg>
<div style="left:783px;top:332px;width:22px;height:22px;border:1px solid #7b90a8;box-sizing:border-box;background:linear-gradient(#f4f8fc 0%,#ffffff 20%,#dde8f3 60%,#c3d5e8 100%)"></div>
<svg style="position:absolute;left:783px;top:332px" width="22" height="22" viewBox="0 0 22 22">
<path d="M4 16.8 L7.2 11.4 L11.2 14.4 L9 16.8 Z" fill="#ffffff" stroke="#d8d0c8" stroke-width="0.6"/>
<path d="M11.2 7.4 L15.2 3.8 L18.1 6.4 L14.4 10.2 Z" fill="#f6f6f6"/>
<path d="M11.2 7.4 L15.2 3.8" stroke="#333" stroke-width="1" stroke-dasharray="1.2 0.8"/>
<path d="M15.2 3.8 Q16.8 3.4 18.1 5.4 L14.4 10.2" fill="none" stroke="#000" stroke-width="1.3"/>
<path d="M7 10.4 L11.2 7.4 L14.4 10.2 L11.5 14.4 Z" fill="#fafafa"/>
<path d="M7 10.4 L11.2 7.4 L14.4 10.2 L11.5 14.4" fill="none" stroke="#111" stroke-width="1.1"/>
<path d="M7 10.4 L11.5 14.4" stroke="#777" stroke-width="0.6"/>
</svg>
<div class="t" style="left:184px;width:400px;text-align:right;top:362px;font-size:13px;letter-spacing:0.278px;color:#333;"><span style="margin-right:-0.278px">Grund:</span></div>
<div style="left:591px;top:360px;width:213px;height:21px;background:#fffdd6;border:1px solid #abaa90;box-sizing:border-box;box-shadow:inset 1px 1px 0 #fff,1px 1px 0 #fff"></div>
<div class="t" style="left:184px;width:400px;text-align:right;top:394px;font-size:13px;letter-spacing:0.350px;color:#333;"><span style="margin-right:-0.350px">Währung:</span></div>
<div style="left:591px;top:392px;width:38px;height:21px;background:#fffdd6;border:1px solid #abaa90;box-sizing:border-box;box-shadow:inset 1px 1px 0 #fff,1px 1px 0 #fff"></div>
<div class="t" style="left:593.5px;top:393px;font-size:13px;letter-spacing:-0.572px;color:#222;">EUR</div>
<div style="left:630px;top:392px;width:152px;height:21px;background:#ececec;border:1px solid #a3a3a3;box-sizing:border-box;box-shadow:inset 1px 1px 0 #fff,1px 1px 0 #fff"></div>
<div class="t" style="left:632.5px;top:393px;font-size:13px;letter-spacing:0.218px;color:#333;">Euro</div>
<div style="left:783px;top:392px;width:22px;height:22px;border:1px solid #7b90a8;box-sizing:border-box;background:linear-gradient(#f4f8fc 0%,#ffffff 20%,#dde8f3 60%,#c3d5e8 100%)"></div>
<svg style="position:absolute;left:783px;top:392px" width="22" height="22" viewBox="0 0 22 22">
<path d="M4 16.8 L7.2 11.4 L11.2 14.4 L9 16.8 Z" fill="#ffffff" stroke="#d8d0c8" stroke-width="0.6"/>
<path d="M11.2 7.4 L15.2 3.8 L18.1 6.4 L14.4 10.2 Z" fill="#f6f6f6"/>
<path d="M11.2 7.4 L15.2 3.8" stroke="#333" stroke-width="1" stroke-dasharray="1.2 0.8"/>
<path d="M15.2 3.8 Q16.8 3.4 18.1 5.4 L14.4 10.2" fill="none" stroke="#000" stroke-width="1.3"/>
<path d="M7 10.4 L11.2 7.4 L14.4 10.2 L11.5 14.4 Z" fill="#fafafa"/>
<path d="M7 10.4 L11.2 7.4 L14.4 10.2 L11.5 14.4" fill="none" stroke="#111" stroke-width="1.1"/>
<path d="M7 10.4 L11.5 14.4" stroke="#777" stroke-width="0.6"/>
</svg>
<div class="t" style="left:184px;width:400px;text-align:right;top:422px;font-size:13px;letter-spacing:0.662px;color:#333;"><span style="margin-right:-0.662px">Zahlungsart:</span></div>
<div style="left:591px;top:420px;width:38px;height:21px;background:#fffdd6;border:1px solid #abaa90;box-sizing:border-box;box-shadow:inset 1px 1px 0 #fff,1px 1px 0 #fff"></div>
<div class="t" style="left:593.5px;top:421px;font-size:13px;letter-spacing:0.220px;color:#222;">as</div>
<div style="left:630px;top:420px;width:152px;height:21px;background:#ececec;border:1px solid #a3a3a3;box-sizing:border-box;box-shadow:inset 1px 1px 0 #fff,1px 1px 0 #fff"></div>
<div class="t" style="left:632.7px;top:421px;font-size:13px;letter-spacing:0.630px;color:#333;">absolut sofort</div>
<div style="left:783px;top:420px;width:22px;height:22px;border:1px solid #7b90a8;box-sizing:border-box;background:linear-gradient(#f4f8fc 0%,#ffffff 20%,#dde8f3 60%,#c3d5e8 100%)"></div>
<svg style="position:absolute;left:783px;top:420px" width="22" height="22" viewBox="0 0 22 22">
<path d="M4 16.8 L7.2 11.4 L11.2 14.4 L9 16.8 Z" fill="#ffffff" stroke="#d8d0c8" stroke-width="0.6"/>
<path d="M11.2 7.4 L15.2 3.8 L18.1 6.4 L14.4 10.2 Z" fill="#f6f6f6"/>
<path d="M11.2 7.4 L15.2 3.8" stroke="#333" stroke-width="1" stroke-dasharray="1.2 0.8"/>
<path d="M15.2 3.8 Q16.8 3.4 18.1 5.4 L14.4 10.2" fill="none" stroke="#000" stroke-width="1.3"/>
<path d="M7 10.4 L11.2 7.4 L14.4 10.2 L11.5 14.4 Z" fill="#fafafa"/>
<path d="M7 10.4 L11.2 7.4 L14.4 10.2 L11.5 14.4" fill="none" stroke="#111" stroke-width="1.1"/>
<path d="M7 10.4 L11.5 14.4" stroke="#777" stroke-width="0.6"/>
</svg>
<div class="t" style="left:184px;width:400px;text-align:right;top:460px;font-size:13px;letter-spacing:0.606px;color:#333;"><span style="margin-right:-0.606px">Versandart:</span></div>
<div style="left:591px;top:458px;width:191px;height:21px;background:#fffdd6;border:1px solid #abaa90;box-sizing:border-box;box-shadow:inset 1px 1px 0 #fff,1px 1px 0 #fff"></div>
<div style="left:783px;top:458px;width:22px;height:22px;border:1px solid #7b90a8;box-sizing:border-box;background:linear-gradient(#f4f8fc 0%,#ffffff 20%,#dde8f3 60%,#c3d5e8 100%)"></div>
<svg style="position:absolute;left:783px;top:458px" width="22" height="22" viewBox="0 0 22 22">
<path d="M4 16.8 L7.2 11.4 L11.2 14.4 L9 16.8 Z" fill="#ffffff" stroke="#d8d0c8" stroke-width="0.6"/>
<path d="M11.2 7.4 L15.2 3.8 L18.1 6.4 L14.4 10.2 Z" fill="#f6f6f6"/>
<path d="M11.2 7.4 L15.2 3.8" stroke="#333" stroke-width="1" stroke-dasharray="1.2 0.8"/>
<path d="M15.2 3.8 Q16.8 3.4 18.1 5.4 L14.4 10.2" fill="none" stroke="#000" stroke-width="1.3"/>
<path d="M7 10.4 L11.2 7.4 L14.4 10.2 L11.5 14.4 Z" fill="#fafafa"/>
<path d="M7 10.4 L11.2 7.4 L14.4 10.2 L11.5 14.4" fill="none" stroke="#111" stroke-width="1.1"/>
<path d="M7 10.4 L11.5 14.4" stroke="#777" stroke-width="0.6"/>
</svg>
<div class="t" style="left:184px;width:400px;text-align:right;top:488px;font-size:13px;letter-spacing:0.148px;color:#333;"><span style="margin-right:-0.148px">USt-IdNr.:</span></div>
<div style="left:591px;top:486px;width:191px;height:21px;background:#fffdd6;border:1px solid #abaa90;box-sizing:border-box;box-shadow:inset 1px 1px 0 #fff,1px 1px 0 #fff"></div>
<div style="left:783px;top:486px;width:22px;height:22px;border:1px solid #7b90a8;box-sizing:border-box;background:linear-gradient(#f4f8fc 0%,#ffffff 20%,#dde8f3 60%,#c3d5e8 100%)"></div>
<svg style="position:absolute;left:783px;top:486px" width="22" height="22" viewBox="0 0 22 22">
<circle cx="11" cy="10.8" r="6.6" fill="#fff" stroke="#222" stroke-width="0.9" stroke-dasharray="1.6 1.2"/>
<circle cx="11" cy="10.8" r="5.5" fill="#0000f4"/>
<rect x="10.15" y="9.9" width="1.8" height="4.9" fill="#fff"/><rect x="10.15" y="7.1" width="1.8" height="1.7" fill="#fff"/></svg>
<div class="t" style="left:184px;width:400px;text-align:right;top:516px;font-size:13px;letter-spacing:0.613px;color:#333;"><span style="margin-right:-0.613px">Rechnungsart:</span></div>
<div style="left:591px;top:514px;width:214px;height:22px;border:1px solid #7890a8;box-sizing:border-box;background:#eeeeee;box-shadow:inset 1px 1px 0 #bcd0e6,inset -1px -1px 0 #bcd0e6"></div>
<div style="left:785px;top:514px;width:20px;height:22px;border:1px solid #7890a8;box-sizing:border-box;background:linear-gradient(#f0f5fb 0%,#ffffff 25%,#dce7f2 60%,#c5d6e9 100%)"></div>
<svg style="position:absolute;left:790px;top:523px" width="10" height="5"><path d="M0 0 H10 L5 5 Z" fill="#2e2e2e"/></svg>
<div class="t" style="left:593.2px;top:516px;font-size:13px;letter-spacing:0.753px;color:#333;">Bruttorechnung</div>
<div class="t" style="left:184px;width:400px;text-align:right;top:544px;font-size:13px;letter-spacing:0.467px;color:#333;"><span style="margin-right:-0.467px">Auftragssumme:</span></div>
<div style="left:591px;top:542px;width:143px;height:21px;background:#ecebdf;border:1px solid #abaa90;box-sizing:border-box;box-shadow:inset 1px 1px 0 #fff,1px 1px 0 #fff"></div>
<div class="t" style="left:597px;top:543px;font-size:13px;letter-spacing:-0.572px;color:#333;">EUR</div>
<div class="t" style="left:331.5px;width:400px;text-align:right;top:543px;font-size:13px;letter-spacing:0.632px;color:#333;"><span style="margin-right:-0.632px">0,00</span></div>
<div class="t" style="left:184px;width:400px;text-align:right;top:572px;font-size:13px;letter-spacing:0.312px;color:#333;"><span style="margin-right:-0.312px">Anzahlung:</span></div>
<div style="left:591px;top:570px;width:143px;height:21px;background:#fffdd6;border:1px solid #abaa90;box-sizing:border-box;box-shadow:inset 1px 1px 0 #fff,1px 1px 0 #fff"></div>
<div class="t" style="left:597px;top:571px;font-size:13px;letter-spacing:-0.572px;color:#333;">EUR</div>
<div class="t" style="left:331.5px;width:400px;text-align:right;top:571px;font-size:13px;letter-spacing:0.632px;color:#333;"><span style="margin-right:-0.632px">0,00</span></div>
<div class="t" style="left:742.7px;top:572px;font-size:13px;letter-spacing:0.377px;color:#333;">Vorkasse:</div>
<div style="left:812px;top:580px;width:14px;height:4px;background:#ff0000;border-radius:1.5px"></div>
<div style="left:864px;top:354px;width:3px;height:21px;border:1px solid #a6a6a6;box-sizing:border-box;background:#eeeeee"></div>
<div class="t" style="left:562px;width:400px;text-align:right;top:109px;font-size:13px;letter-spacing:0.539px;color:#333;"><span style="margin-right:-0.539px">Lieferung an:</span></div>
<div style="left:969px;top:107px;width:213px;height:22px;overflow:hidden">
<div style="left:0px;top:0px;width:215px;height:22px;border:1px solid #7890a8;box-sizing:border-box;background:#eeeeee;box-shadow:inset 1px 1px 0 #bcd0e6,inset -1px -1px 0 #bcd0e6"></div>
<div style="left:195px;top:0px;width:20px;height:22px;border:1px solid #7890a8;box-sizing:border-box;background:linear-gradient(#f0f5fb 0%,#ffffff 25%,#dce7f2 60%,#c5d6e9 100%)"></div>
<svg style="position:absolute;left:200px;top:9px" width="10" height="5"><path d="M0 0 H10 L5 5 Z" fill="#2e2e2e"/></svg>
<div class="t" style="left:3.6px;top:2px;font-size:13px;letter-spacing:0.527px;color:#333;">Auftragsadresse</div>
</div>
<div class="t" style="left:562px;width:400px;text-align:right;top:152px;font-size:13px;letter-spacing:0.426px;color:#333;"><span style="margin-right:-0.426px">Rechnung an:</span></div>
<div style="left:969px;top:150px;width:213px;height:22px;overflow:hidden">
<div style="left:0px;top:0px;width:215px;height:22px;border:1px solid #7890a8;box-sizing:border-box;background:#eeeeee;box-shadow:inset 1px 1px 0 #bcd0e6,inset -1px -1px 0 #bcd0e6"></div>
<div style="left:195px;top:0px;width:20px;height:22px;border:1px solid #7890a8;box-sizing:border-box;background:linear-gradient(#f0f5fb 0%,#ffffff 25%,#dce7f2 60%,#c5d6e9 100%)"></div>
<svg style="position:absolute;left:200px;top:9px" width="10" height="5"><path d="M0 0 H10 L5 5 Z" fill="#2e2e2e"/></svg>
<div class="t" style="left:3.6px;top:2px;font-size:13px;letter-spacing:0.527px;color:#333;">Auftragsadresse</div>
</div>
<div style="left:5px;top:604px;width:1188px;height:35px;background:linear-gradient(#ffffff 0%,#f2f2f2 40%,#dcdcdc 95%,#f4f4f4 100%)"></div>
<div style="left:362px;top:607px;width:105px;height:31px;background:#eeeeee;border:1px solid #9a9a9a;box-sizing:border-box;box-shadow:inset 1px 1px 0 #fff,0 0 0 1px #fff"></div>
<svg style="position:absolute;left:367px;top:613px" width="26" height="21" viewBox="0 0 26 21">
<defs><linearGradient id="lid" x1="0" y1="0" x2="0" y2="1"><stop offset="0" stop-color="#d8dadc"/><stop offset="1" stop-color="#8c9096"/></linearGradient></defs>
<path d="M1 5.6 L5.3 1 L8.6 4 L4.3 8.6 Z" fill="#9a5e00"/>
<path d="M10.8 1 H23.5 L21.2 3.8 H8.6 Z" fill="#9a5e00"/>
<path d="M4.5 8.4 L7.6 5 H20.4 L17.2 8.4 Z" fill="url(#lid)"/>
<rect x="4" y="8.3" width="13.2" height="10.6" fill="#9a5e00"/>
<path d="M17 8.5 L20.2 5.2 L24 8.9 L20.8 12.2 Z" fill="#9a5e00"/>
<path d="M17.2 10 L21 13.8 L17.2 17.6 Z" fill="#7e0000"/>
<rect x="5" y="11.8" width="8.2" height="5.2" fill="#ffd598"/>
<path d="M6.1 13.5 H8 M6.1 15.4 H9.1 M10.2 15.4 H11.8" stroke="#000" stroke-width="0.9"/>
</svg>
<div class="t" style="left:395.5px;top:614px;font-size:13px;letter-spacing:0.517px;color:#333;">Rückstand</div>
<div style="left:473px;top:607px;width:95px;height:31px;background:#eeeeee;border:1px solid #9a9a9a;box-sizing:border-box;box-shadow:inset 1px 1px 0 #fff,0 0 0 1px #fff"></div>
<svg style="position:absolute;left:478px;top:613px" width="27" height="20" viewBox="0 0 27 20">
<defs><linearGradient id="tg" x1="0" y1="0" x2="1" y2="1"><stop offset="0" stop-color="#fbf9d2"/><stop offset="1" stop-color="#e2dc6c"/></linearGradient></defs>
<path d="M8 2.4 H24.6 V18.6 H11.4 L8 15 Z" fill="#111"/>
<path d="M6.7 5 L10.2 1.2 H23.3 V17.3 H10.2 L6.7 13.7 Z" fill="url(#tg)" stroke="#9a9a9a" stroke-width="0.5"/>
<circle cx="10.2" cy="8.8" r="1.3" fill="#fff" stroke="#222" stroke-width="0.8"/>
<path d="M1.2 5.6 L2 7.8 L4.5 8.6 L3.2 10.2 L5.8 9.8 L9.1 8.9" fill="none" stroke="#a00010" stroke-width="0.9"/>
</svg>
<div class="t" style="left:506.3px;top:614px;font-size:13px;letter-spacing:0.542px;color:#333;">Packliste</div>
<div style="left:574px;top:607px;width:114px;height:31px;background:#eeeeee;border:1px solid #9a9a9a;box-sizing:border-box;box-shadow:inset 1px 1px 0 #fff,0 0 0 1px #fff"></div>
<svg style="position:absolute;left:582px;top:614px" width="22" height="20" viewBox="0 0 22 20">
<path d="M0.7 18 V1.6 H16.2 L18.6 6.8 V18" fill="#e9e9e9"/>
<path d="M0.7 18 V1.6 H16.4 M18.6 7 V18" fill="none" stroke="#000" stroke-width="1.2"/>
<path d="M15.8 1.2 L19.2 7.2" stroke="#000" stroke-width="1.3" stroke-dasharray="1.6 0.7"/>
<path d="M14.8 2.2 L18 7.8" stroke="#222" stroke-width="1" stroke-dasharray="1.2 0.9"/>
<path d="M3.1 7.6 L6.4 4.3 H14.8 V12.5 L11.8 15.5 H3.1 Z" fill="#18e040" stroke="#5a305a" stroke-width="0.6" stroke-dasharray="0.8 0.6"/>
<rect x="3.1" y="7.6" width="8.7" height="7.9" fill="#103010"/>
<path d="M3.8 8.3 h3.2 v3 h-3.2z M8 8.3 h3.2 v3 h-3.2z M3.8 12 h3.2 v2.9 h-3.2z M8 12 h3.2 v2.9 h-3.2z" fill="#22f040"/>
<path d="M4.4 8.8 h1.4 v1.2 h-1.4z M8.6 8.8 h1.4 v1.2 h-1.4z M4.4 12.5 h1.4 v1.2 h-1.4z M8.6 12.5 h1.4 v1.2 h-1.4z" fill="#9affa8"/></svg>
<div class="t" style="left:607.9px;top:614px;font-size:13px;letter-spacing:0.496px;color:#333;">Lieferschein</div>
<div style="left:694px;top:607px;width:102px;height:31px;background:#eeeeee;border:1px solid #9a9a9a;box-sizing:border-box;box-shadow:inset 1px 1px 0 #fff,0 0 0 1px #fff"></div>
<svg style="position:absolute;left:702px;top:614px" width="22" height="20" viewBox="0 0 22 20">
<path d="M0.7 18 V1.6 H16.2 L18.6 6.8 V18" fill="#e9e9e9"/>
<path d="M0.7 18 V1.6 H16.4 M18.6 7 V18" fill="none" stroke="#000" stroke-width="1.2"/>
<path d="M15.8 1.2 L19.2 7.2" stroke="#000" stroke-width="1.3" stroke-dasharray="1.6 0.7"/>
<path d="M14.8 2.2 L18 7.8" stroke="#222" stroke-width="1" stroke-dasharray="1.2 0.9"/>
<path d="M13.8 7 C12.5 4.2 6.5 3.8 5 9.5 C4 14.5 8.5 17 13 14.5" fill="none" stroke="#10e010" stroke-width="1.5"/>
<path d="M13.8 7 C12.5 4.2 6.5 3.8 5 9.5 C4 14.5 8.5 17 13 14.5" fill="none" stroke="#007000" stroke-width="0.5"/>
<rect x="3" y="8.6" width="10" height="2.8" fill="#0a9a0a" stroke="#20e020" stroke-width="0.6"/></svg>
<div class="t" style="left:727.9000000000001px;top:614px;font-size:13px;letter-spacing:0.541px;color:#333;">Rechnung</div>
<div style="left:802px;top:607px;width:91px;height:31px;background:#eeeeee;border:1px solid #9a9a9a;box-sizing:border-box;box-shadow:inset 1px 1px 0 #fff,0 0 0 1px #fff"></div>
<svg style="position:absolute;left:803px;top:630px" width="8" height="7"><path d="M0 0 L7 7 H0 Z" fill="#a9a9f5"/></svg>
<svg style="position:absolute;left:809px;top:612px" width="23" height="22" viewBox="0 0 23 22">
<path d="M4.3 1.5 H16 L17.3 2.8 V12 H4.3 Z" fill="#d2fcfc" stroke="#000" stroke-width="1.1"/>
<path d="M16 1.5 L17.3 2.8" stroke="#fff" stroke-width="1.2"/>
<path d="M6.5 4.2 h1.6 M6.6 4.2 v2 M9.4 5 v1.2 M11.6 4.2 v2 h1.4 M14 5.5 v0.8 M6.6 8.2 v1.8 M8.4 8 h1.5 v2 M11.5 8.5 v1.5 M13 8 h1.2 v1.8" stroke="#111" stroke-width="0.9"/>
<path d="M1.2 12.6 Q1.2 10.6 3.2 10.6 H18.8 Q20.8 10.6 20.8 12.6 V19.6 Q20.8 20.6 19.8 20.6 H2.2 Q1.2 20.6 1.2 19.6 Z" fill="#a6a6a6" stroke="#000" stroke-width="1.2"/>
<rect x="1.8" y="16.5" width="18.4" height="3.6" fill="#707070"/>
<path d="M1.2 16.3 H20.8" stroke="#000" stroke-width="1"/>
<path d="M15.2 13.8 h2.6" stroke="#000" stroke-width="1"/></svg>
<div class="t" style="left:836.0999999999999px;top:614px;font-size:13px;letter-spacing:0.493px;color:#333;">Drucken</div>
<div style="left:899px;top:607px;width:71px;height:31px;background:#eeeeee;border:1px solid #9a9a9a;box-sizing:border-box;box-shadow:inset 1px 1px 0 #fff,0 0 0 1px #fff"></div>
<svg style="position:absolute;left:900px;top:630px" width="8" height="7"><path d="M0 0 L7 7 H0 Z" fill="#a9a9f5"/></svg>
<svg style="position:absolute;left:907px;top:615px" width="21" height="16" viewBox="0 0 21 16">
<defs><linearGradient id="eg" x1="0" y1="0" x2="0" y2="1"><stop offset="0" stop-color="#fdfdfd"/><stop offset="1" stop-color="#dcdcdc"/></linearGradient></defs>
<rect x="1.3" y="1.3" width="18.2" height="13.4" rx="1.8" fill="url(#eg)" stroke="#000" stroke-width="1.35"/>
<path d="M2.5 2.5 L8.3 8.3 Q10.4 10 12.5 8.3 L18.3 2.5" fill="none" stroke="#444" stroke-width="0.8"/>
<path d="M2.5 13.6 L7.3 8.8 M18.3 13.6 L13.5 8.8" fill="none" stroke="#666" stroke-width="0.6"/></svg>
<div class="t" style="left:932.5px;top:614px;font-size:13px;letter-spacing:0.116px;color:#333;">EMail</div>
<div style="left:976px;top:607px;width:108px;height:31px;background:#b9cfe6;border:1px solid #7890a8;box-sizing:border-box;box-shadow:inset 1px 1px 0 #c8dcf0,0 0 0 1px #fff"></div>
<svg style="position:absolute;left:984px;top:612px" width="20" height="22" viewBox="0 0 20 22">
<path d="M3.6 19.6 V1.6 H13.4 L17.6 6.6 V19.6 Z" fill="#d2d2ff"/>
<path d="M3.6 19.6 V1.6 H13.6 M17.6 6.8 V19.6 H3.6" fill="none" stroke="#000" stroke-width="1.2"/>
<path d="M13 1.2 L18 7" stroke="#000" stroke-width="1.3" stroke-dasharray="1.6 0.7"/>
<path d="M12.2 2.4 L16.6 7.6" stroke="#222" stroke-width="1" stroke-dasharray="1.2 0.9"/>
<path d="M2.2 10 L5.8 13.6 L9.2 4.6" fill="none" stroke="#10b838" stroke-width="2" stroke-dasharray="1.4 0.5"/>
</svg>
<div class="t" style="left:1012.9000000000001px;top:614px;font-size:13px;letter-spacing:0.502px;color:#333;">Speichern</div>
<div style="left:1090px;top:607px;width:100px;height:31px;background:#eeeeee;border:1px solid #9a9a9a;box-sizing:border-box;box-shadow:inset 1px 1px 0 #fff,0 0 0 1px #fff"></div>
<svg style="position:absolute;left:1097px;top:612px" width="23" height="22" viewBox="0 0 23 22">
<path d="M6.3 20.5 V1.6 H16.3 L20.9 6.6 V20.5 Z" fill="#d2d2ff"/>
<path d="M6.3 20.5 V1.6 H16.5 M20.9 6.8 V20.5 H6.3" fill="none" stroke="#000" stroke-width="1.2"/>
<path d="M15.9 1.2 L21.3 7" stroke="#000" stroke-width="1.3" stroke-dasharray="1.6 0.7"/>
<path d="M15.1 2.4 L19.9 7.6" stroke="#222" stroke-width="1" stroke-dasharray="1.2 0.9"/>
<path d="M1 9.5 H10 V6 L16 11.5 L10 17 V13.4 H1 Z" fill="#10b840" stroke="#000" stroke-width="1.2"/>
</svg>
<div class="t" style="left:1123.9px;top:614px;font-size:13px;letter-spacing:0.382px;color:#333;">Schließen</div>
</div></body></html>
